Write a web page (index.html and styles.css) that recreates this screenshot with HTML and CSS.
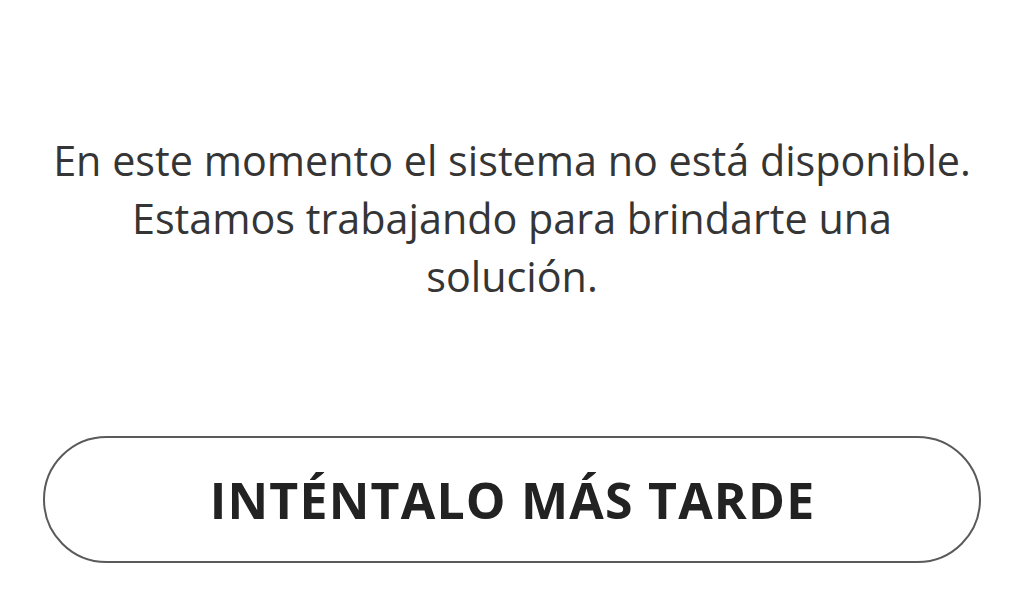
FILE: index.html
```html
<!DOCTYPE html>
<html lang="es">
<head>
<meta charset="utf-8">
<link rel="stylesheet" href="styles.css">
</head>
<body>
<main class="page">
  <p class="message">En este momento el sistema no está disponible.<br>Estamos trabajando para brindarte una<br>solución.</p>
  <button class="retry" type="button">INTÉNTALO MÁS TARDE</button>
</main>
</body>
</html>
```
FILE: styles.css
```css
html, body {
  margin: 0;
  padding: 0;
  background: #ffffff;
}
.page {
  width: 1024px;
  height: 597px;
  box-sizing: border-box;
  padding: 131px 43px 0 43px;
  display: flex;
  flex-direction: column;
  align-items: stretch;
  font-family: "Open Sans", "Noto Sans", sans-serif;
}
.message {
  margin: 0;
  text-align: center;
  color: #353535;
  font-size: 41.3px;
  line-height: 58px;
  font-weight: 400;
}
.retry {
  margin-top: 131px;
  height: 127px;
  box-sizing: border-box;
  border: 2px solid #5a5a5a;
  border-radius: 64px;
  background: #ffffff;
  color: #222222;
  font-family: "Open Sans", "Noto Sans", sans-serif;
  font-weight: 700;
  font-size: 50px;
  letter-spacing: 1.2px;
  padding: 0 0 0 1.2px;
}
```
